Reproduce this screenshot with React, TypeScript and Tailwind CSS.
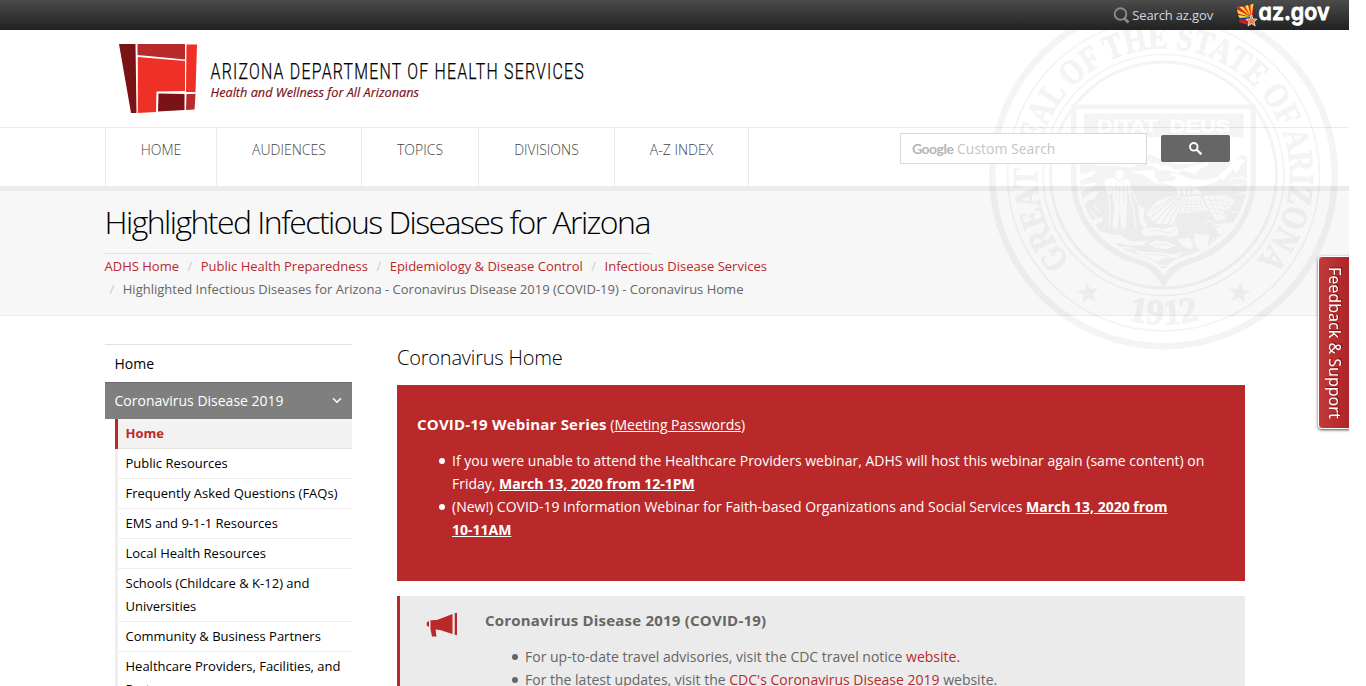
import React from "react";

const navItems = [
  { label: "HOME", cls: "w-[111px]" },
  { label: "AUDIENCES", cls: "w-[145px]" },
  { label: "TOPICS", cls: "w-[117px]" },
  { label: "DIVISIONS", cls: "w-[136px]" },
  { label: "A-Z INDEX", cls: "w-[135px] border-r" },
];

const crumbs = [
  "ADHS Home",
  "Public Health Preparedness",
  "Epidemiology & Disease Control",
  "Infectious Disease Services",
];

const sideItems = [
  "Public Resources",
  "Frequently Asked Questions (FAQs)",
  "EMS and 9-1-1 Resources",
  "Local Health Resources",
  "Schools (Childcare & K-12) and Universities",
  "Community & Business Partners",
  "Healthcare Providers, Facilities, and Partners",
];

const STAR = "M0-11.5 2.7-3.7 11-3.5 4.4 1.5 6.8 9.4 0 4.7-6.8 9.4-4.4 1.5-11-3.5-2.7-3.7Z";

function SealScene() {
  return (
    <g transform="translate(71 95) scale(.33333)">
      <path
        d="M50 212 90 204 112 212 170 212 215 218 240 205 268 178 300 192 350 208 400 206 445 184 462 196 492 190 516 206 545 178 578 196V520H50Z"
        fill="#f4f4f4"
      />
      <g fill="#fff">
        <path d="M50 240 82 234 108 228 92 246 68 252 50 266Z" />
        <path d="M60 272 84 266 112 262 100 276 80 280 62 290Z" />
        <path d="M54 340 76 304 104 288 118 292 100 312 82 318 70 348 60 366Z" />
        <path d="M84 386 104 372 128 366 130 378 108 388 96 402Z" />
        <path d="M168 232Q180 218 192 232L190 248 178 256 168 246Z" />
        <path d="M134 256 160 248 178 262 200 250 208 262 216 288 210 300 200 284 200 330 198 400 184 402 180 340 172 402 158 400 162 330 158 290 146 300 136 282Z" />
        <path d="M212 230 282 224 286 246 300 268 282 262 252 240Z" />
        <path d="M264 196 276 208 290 202 304 214 322 210 346 224 372 226 352 234 322 226 296 226 280 214 262 212Z" />
        <path d="M352 206 374 190 392 176 372 176 358 190 336 196Z" />
        <path d="M366 222 404 212 438 202 450 198 442 212 420 222 404 236 384 230Z" />
        <path d="M294 262 330 270 352 282 408 278 448 268 470 262 486 246 470 248 428 256 384 250 352 236 330 236 350 250 334 258Z" />
        <path d="M474 244 496 224 516 204 526 196 544 190 554 198 540 214 530 236 520 222 506 236 490 256Z" />
        <path d="M258 352 276 336 288 320 322 306 354 300 374 308 358 346 344 390 318 386 292 388 270 370Z" />
        <path d="M350 284 410 280 424 296 352 298Z" />
        <path d="M376 306 420 302 444 348 356 356Z" />
        <path d="M428 304 500 300 524 318 510 340 490 348 500 370 470 378 456 356Z" />
        <path d="M232 330 254 340 250 372 262 392 252 400 240 380Z" />
        <path d="M402 416 448 420 442 456 418 466 404 444Z" />
        <path d="M252 400 276 396 312 402 350 392 356 420 330 426 300 420 262 424 244 414Z" />
        <path d="M120 408 148 418 182 420 208 438 236 440 262 436 250 450 212 452 180 444 150 444Z" />
        <path d="M266 446 290 436 320 440 350 452 320 462 290 460Z" />
        <path d="M350 432 390 428 400 450 394 464 368 452Z" />
        <path d="M226 466 262 472 300 472 340 478 372 472 352 490 318 488 290 500 262 486 236 480Z" />
        <path d="M468 400 500 386 528 380 520 400 496 420 476 418Z" />
      </g>
      <g fill="none" stroke="#f4f4f4" strokeWidth="4">
        <path d="M262 354 344 304M270 368 350 304M284 382 358 304M304 384 362 306M324 386 368 308M340 388 374 312" />
        <path d="M366 284V296M380 284V296M394 282V296" strokeWidth="7" />
        <path d="M374 318H424M370 328H430M366 338H436M362 348H440M384 306 376 352M396 306 394 352M408 306 412 350M418 306 428 350" strokeWidth="2.500" />
        <path d="M436 314 512 322M444 326 510 334M450 340 492 346M456 352 496 360M446 306 478 374M462 304 490 366M480 302 498 344M496 302 508 338" strokeWidth="2.500" />
        <path d="M170 262 168 320M190 262 192 326M178 276V334M150 266 160 288M204 268 200 288" strokeWidth="3" />
        <path d="M268 408Q290 402 308 410T348 404M280 448Q300 444 330 452M250 478Q290 478 330 484" strokeWidth="3" />
      </g>
      <g fill="none" stroke="#fff" strokeWidth="3.500">
        <path d="M146 300 150 340 148 398M210 300 222 350 228 400M216 288 240 338M100 330 122 352M92 350 116 374M110 404 146 436M136 452 196 458 230 462" />
        <path d="M430 384Q450 372 462 384T504 386M456 398 500 380M460 430V446M472 424V446M482 422V442M452 456 496 442M400 480 446 470M350 500 410 488M194 470 246 500M282 510 336 512M296 524 324 524" />
        <path d="M508 252 540 246 562 256M522 268 550 276M530 300 556 292 562 310M536 330 560 336M516 350 548 352" />
      </g>
    </g>
  );
}

function Seal() {
  return (
    <svg
      className="pointer-events-none absolute left-[989px] top-0 mix-blend-multiply"
      width="350"
      height="350"
      viewBox="0 0 350 350"
    >
      <defs>
        <path id="ringTop" d="M81.2 260.5A126.5 126.5 0 1 1 267.8 260.5" />
        <path id="ringBottom" d="M100 304.5A149.5 149.5 0 0 0 249 304.5" />
        <clipPath id="shieldInner">
          <path d="M91 141H258V180C258 218 229 247 196 256Q182 260 174.500 270Q167 260 153 256C120 247 91 218 91 180Z" />
        </clipPath>
      </defs>
      <g fill="none" stroke="#f4f4f4">
        <circle cx="174.500" cy="175" r="171.300" strokeWidth="6.500" />
        <circle cx="174.500" cy="175" r="156" strokeWidth="1.700" />
        <circle cx="174.500" cy="175" r="120.500" strokeWidth="1.700" />
        <circle cx="174.500" cy="175" r="113" strokeWidth="3" />
      </g>
      <g fill="#f4f4f4" stroke="#f4f4f4" strokeWidth="1" fontFamily="Liberation Serif, serif" fontWeight="700">
        <text fontSize="35" textLength="584" lengthAdjust="spacingAndGlyphs">
          <textPath href="#ringTop" textLength="584" lengthAdjust="spacingAndGlyphs">
            GREAT SEAL OF THE STATE OF ARIZONA
          </textPath>
        </text>
        <text fontSize="36">
          <textPath href="#ringBottom" startOffset="50%" textAnchor="middle">
            1912
          </textPath>
        </text>
      </g>
      <g fill="#f4f4f4">
        <path d={STAR} transform="translate(99 293) rotate(-8)" />
        <path d={STAR} transform="translate(250.500 293) rotate(8)" />
      </g>
      <path
        d="M82 104.500H267V180C267 222 236 255 201 264Q184 269 174.500 288Q165 269 148 264C113 255 82 222 82 180Z"
        fill="#f4f4f4"
      />
      <path
        d="M87.500 109H261.500V180C261.500 220 232 249 199 259Q182 264 174.500 276Q167 264 150 259C117 249 87.500 220 87.500 180Z"
        fill="#fff"
      />
      <rect x="95" y="113.500" width="159.500" height="23.500" fill="#f4f4f4" />
      <text
        x="108"
        y="131.500"
        fontFamily="Liberation Sans, sans-serif"
        fontWeight="700"
        fontSize="17"
        fill="#fff"
        stroke="#fff"
        strokeWidth=".4"
        wordSpacing="5"
        textLength="133"
        lengthAdjust="spacingAndGlyphs"
      >
        DITAT DEUS
      </text>
      <g clipPath="url(#shieldInner)">
        <SealScene />
      </g>
      <path d="M163 265Q170 268 174.500 276 179 268 186 265L174.500 287Z" fill="#f4f4f4" />
    </svg>
  );
}

function BrandMark() {
  return (
    <svg width="480" height="76" viewBox="0 0 480 76" className="block">
      <path d="M0 4H16.500L17.500 73H12Z" fill="#7a1216" />
      <path d="M18.500 4H66V19.500L18.500 15Z" fill="#b82a2b" />
      <path d="M67.500 4.500H78L76.500 52H67Z" fill="#ee3026" />
      <path d="M18.800 17 66 21V51L37.500 51.500 37 72 18.800 73Z" fill="#ee3026" />
      <path d="M39.500 53.500 65.500 54V70L39 71.500Z" fill="#7a1216" />
      <path d="M67.500 54 76.500 54 75.500 69.500 67 70Z" fill="#b82a2b" />
      <text
        x="91.500"
        y="38.800"
        fontFamily="Roboto, sans-serif"
        fontWeight="300"
        fontSize="21.200"
        letterSpacing="1.600"
        fill="#000"
        stroke="#000"
        strokeWidth=".25"
        textLength="374.500"
        lengthAdjust="spacingAndGlyphs"
      >
        ARIZONA DEPARTMENT OF HEALTH SERVICES
      </text>
      <text
        x="91.500"
        y="57"
        fontFamily="Open Sans, sans-serif"
        fontStyle="italic"
        fontWeight="500"
        fontSize="12.500"
        fill="#7a0a12"
        stroke="#7a0a12"
        strokeWidth=".15"
        textLength="208.500"
        lengthAdjust="spacingAndGlyphs"
      >
        Health and Wellness for All Arizonans
      </text>
    </svg>
  );
}

function AzGov() {
  return (
    <svg width="96" height="28" viewBox="0 0 96 28" className="block">
      <path d="M.5 6.500Q8 8 17.500 3.500L17 16Q9 13 4 18Z" fill="#e0242b" />
      <path d="M4 18Q9 15 17 17V21Q11 23 4 20Z" fill="#2a3f88" />
      <path d="M3.500 19.500Q10 21 17 19L15 25Q9 25 3 22Z" fill="#c2232b" />
      <g fill="#ffd92e">
        <path d="M15 17 1 9.500 2 13.500Z" />
        <path d="M15 17 3 6.800H7Z" />
        <path d="M15 17 9 6 12 5Z" />
        <path d="M15 17 14.500 4.800 17.500 3.500Z" />
        <path d="M15 17 2 15 3.500 18Z" />
      </g>
      <path d="M15.500 15 17 19 21 19.200 18 21.800 19.200 26 15.500 23.600 12 26 13 21.800 10 19.200 14 19Z" fill="#e8823c" stroke="#fff" strokeWidth=".7" />
      <text
        x="22.500"
        y="19.800"
        fontFamily="Inter, sans-serif"
        fontWeight="600"
        fontSize="24"
        fill="#fff"
        stroke="#fff"
        strokeWidth=".8"
        strokeLinejoin="round"
        textLength="71"
        lengthAdjust="spacingAndGlyphs"
        className="[font-feature-settings:'cv11']"
      >
        az.gov
      </text>
    </svg>
  );
}

export default function App() {
  return (
    <div className="h-[686px] w-[1366px] overflow-hidden bg-white font-['Open_Sans',sans-serif] text-black">
      <div className="relative isolate h-[686px] w-[1349px] overflow-hidden bg-white">
        <div className="relative z-10 flex h-[30px] items-start justify-end bg-linear-to-b from-[#4b4b4b] to-[#222] pr-[17px]">
          <a className="mr-[23px] flex h-[30px] items-center gap-[2px] pt-px text-[13px] tracking-[-0.15px] text-[#cfd8e0]">
            <svg width="17" height="17" viewBox="0 0 17 17" fill="none" stroke="#8b8b8b">
              <circle cx="7.500" cy="7" r="5.800" strokeWidth="1.900" />
              <path d="M11.500 11.500 15.500 15.500" strokeWidth="2.600" />
            </svg>
            Search az.gov
          </a>
          <AzGov />
        </div>

        <header className="h-[97px] pl-[119px] pt-[10px]">
          <BrandMark />
        </header>

        <nav className="flex h-[59px] justify-between border-t border-[#ebebeb] pl-[105px] pr-[119px]">
          <ul className="flex">
            {navItems.map((n) => (
              <li
                key={n.label}
                className={`border-l border-[#ebebeb] pt-[10px] text-center text-[14px] font-light leading-[23px] text-[#444] ${n.cls}`}
              >
                {n.label}
              </li>
            ))}
          </ul>
          <div className="relative z-10 flex pt-[5px]">
            <div className="flex h-[31px] w-[247px] items-center border border-[#d9d9d9] bg-white pl-[11px] text-[14px] text-[#c4c4c4]">
              <span className="w-[45px] font-[Lato,sans-serif] text-[14px] font-bold tracking-[-0.5px] text-[#b5b5b5]">Google</span>
              Custom Search
            </div>
            <button className="ml-[14px] mt-[2px] flex h-[27px] w-[69px] items-center justify-center rounded-[2px] bg-[#666]">
              <svg width="13" height="13" viewBox="0 0 13 13" fill="none" stroke="#fff">
                <circle cx="4.800" cy="4.800" r="3.800" strokeWidth="1.900" />
                <path d="M7.500 7.500 12.300 12.300" strokeWidth="2.300" />
              </svg>
            </button>
          </div>
        </nav>

        <section className="h-[130px] border-b border-t-[5px] border-b-[#ebebeb] border-t-[#ebebeb] bg-[#f7f7f7] pl-[104.500px]">
          <h1 className="h-[63px] w-[546px] whitespace-nowrap border-b border-[#e1e1e1] pt-[8px] text-[32px] font-light leading-[45px] tracking-[-1.550px]">
            Highlighted Infectious Diseases for Arizona
          </h1>
          <ol className="flex w-[740px] flex-wrap pt-px text-[13px] leading-[23px] text-[#666]">
            {crumbs.map((c, i) => (
              <li key={c} className="flex text-[#b92929]">
                {i > 0 && <span className="px-[8.500px] text-[#ccc]">/</span>}
                <a>{c}</a>
              </li>
            ))}
            <li className="flex">
              <span className="pl-[5px] pr-[8.500px] text-[#ccc]">/</span>
              Highlighted Infectious Diseases for Arizona - Coronavirus Disease 2019 (COVID-19) - Coronavirus Home
            </li>
          </ol>
        </section>

        <div className="flex pl-[105px] pt-[28px]">
          <aside className="w-[247px] shrink-0 border-t border-[#e1e1e1]">
            <a className="flex h-[37px] items-center pl-[9.500px] text-[14px]">Home</a>
            <a className="flex h-[37px] items-center justify-between border-t border-[#6c6c6c] bg-[#7f7f7f] pb-[2px] pl-[9.500px] pr-[10px] text-[14px] text-white">
              Coronavirus Disease 2019
              <svg className="mt-px" width="10" height="7" viewBox="0 0 10 7" fill="none" stroke="#fff" strokeWidth="1.500">
                <path d="M1 1.200 5 5.200 9 1.200" />
              </svg>
            </a>
            <ul className="ml-[10px] text-[13px] leading-[23px]">
              <li className="border-l-[3px] border-[#b92929]">
                <div className="border-b border-[#e3e3e3] bg-[#f2f2f2] py-[3px] pl-[7.500px] font-bold text-[#b92929]">Home</div>
              </li>
              {sideItems.map((s) => (
                <li key={s} className="border-l-[3px] border-[#efefef]">
                  <div className="border-b border-[#efefef] py-[3px] pl-[7.500px]">{s}</div>
                </li>
              ))}
            </ul>
          </aside>

          <main className="ml-[45px] w-[848px] shrink-0">
            <h2 className="h-[41px] text-[20px] font-light leading-[28px] tracking-[-0.200px]">Coronavirus Home</h2>
            <div className="h-[196px] bg-[#b92929] px-[20px] pt-[28px] text-[14px] leading-[23px] text-white">
              <p>
                <strong className="text-[15px] tracking-[0.200px]">COVID-19 Webinar Series</strong> (<a className="underline">Meeting Passwords</a>)
              </p>
              <ul className="mt-[13px] pl-[35px]">
                <li className="relative before:absolute before:left-[-13px] before:top-[8.500px] before:size-[6px] before:rounded-full before:bg-white">
                  If you were unable to attend the Healthcare Providers webinar, ADHS will host this webinar again (same content) on
                  <br />
                  Friday, <b className="underline">March 13, 2020 from 12-1PM</b>
                </li>
                <li className="relative before:absolute before:left-[-13px] before:top-[8.500px] before:size-[6px] before:rounded-full before:bg-white">
                  (New!) COVID-19 Information Webinar for Faith-based Organizations and Social Services{" "}
                  <b className="underline">
                    March 13, 2020 from
                    <br />
                    10-11AM
                  </b>
                </li>
              </ul>
            </div>
            <div className="mt-[15px] flex border-l-[3px] border-[#b92929] bg-[#ebebeb] pt-[13px] text-[14px] leading-[23px] text-[#666]">
              <svg className="ml-[26px] mt-[3px] shrink-0" width="32" height="26" viewBox="0 0 32 26" fill="#b92929">
                <path d="M3 9V15Q.5 14.500 .5 12T3 9Z" />
                <path d="M4.500 8.300 11 8 26.500 2V22L14 18 9.500 17.500 10.500 24.500H6L4.500 17Z" />
                <path d="M28.700 1H31V23H28.700Z" />
              </svg>
              <div className="ml-[27px]">
                <strong className="block text-[15px] tracking-[0.210px]">Coronavirus Disease 2019 (COVID-19)</strong>
                <ul className="mt-[13px] h-[60px] pl-[40px]">
                  <li className="relative before:absolute before:left-[-13px] before:top-[8.500px] before:size-[6px] before:rounded-full before:bg-[#666]">
                    For up-to-date travel advisories, visit the CDC travel notice <a className="text-[#b92929]">website.</a>
                  </li>
                  <li className="relative before:absolute before:left-[-13px] before:top-[8.500px] before:size-[6px] before:rounded-full before:bg-[#666]">
                    For the latest updates, visit the <a className="text-[#b92929]">CDC's Coronavirus Disease 2019</a> website.
                  </li>
                </ul>
              </div>
            </div>
          </main>
        </div>

        <Seal />

        <button className="absolute left-[1318px] top-[256px] z-20 flex h-[173px] w-[34px] items-center rounded-l-[4px] border border-white bg-linear-to-r from-[#c23a3a] to-[#ad2226] pl-[5px] shadow-[0_1px_3px_rgba(0,0,0,0.7)]">
          <span className="font-['Noto_Sans',sans-serif] text-[16px] leading-[22px] text-white [text-shadow:-1px_-1px_1px_rgba(80,0,0,0.6)] [writing-mode:vertical-rl]">
            Feedback &amp; Support
          </span>
        </button>
      </div>
    </div>
  );
}
